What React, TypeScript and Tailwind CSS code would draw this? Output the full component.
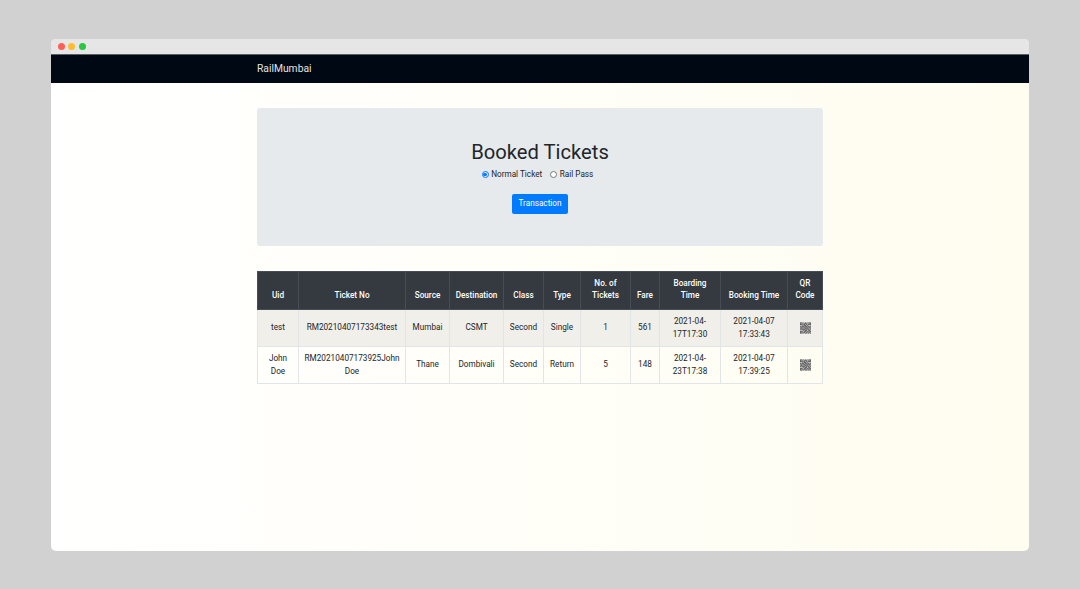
const headers = [
  { label: 'Uid', w: 'w-[41px]' },
  { label: 'Ticket No', w: 'w-[107px]' },
  { label: 'Source', w: 'w-[44px]' },
  { label: 'Destination', w: 'w-[54px]' },
  { label: 'Class', w: 'w-[40px]' },
  { label: 'Type', w: 'w-[37px]' },
  { label: 'No. of Tickets', w: 'w-[50px]' },
  { label: 'Fare', w: 'w-[29px]' },
  { label: 'Boarding Time', w: 'w-[61px]' },
  { label: 'Booking Time', w: 'w-[67px]' },
  { label: 'QR Code', w: 'w-[35px]' },
];

const rows = [
  {
    cells: ['test', 'RM20210407173343test', 'Mumbai', 'CSMT', 'Second', 'Single', '1', '561', '2021-04-17T17:30', '2021-04-07 17:33:43'],
    bg: 'bg-[#f1efea]',
  },
  {
    cells: ['John Doe', 'RM20210407173925John Doe', 'Thane', 'Dombivali', 'Second', 'Return', '5', '148', '2021-04-23T17:38', '2021-04-07 17:39:25'],
    bg: '',
  },
];

// rough qr pattern, it is only 11px wide in the picture
const qrCells = [
  '1110101010111',
  '1010011100101',
  '1110110101111',
  '0001011010000',
  '1011101101101',
  '0110110110110',
  '1101011011011',
  '0110101110100',
  '1011110101101',
  '0000101100110',
  '1110011011011',
  '1010110101010',
  '1110101101101',
];

function QrCode() {
  return (
    <svg width="11" height="12" viewBox="0 0 13 13" className="mx-auto block">
      <rect width="13" height="13" fill="#c8c8c8" />
      {qrCells.map((row, y) =>
        row.split('').map((c, x) =>
          c === '1' ? <rect key={`${x}-${y}`} x={x} y={y} width="1" height="1" fill="#444444" /> : null
        )
      )}
    </svg>
  );
}

export default function App() {
  return (
    <div className="h-[589px] bg-[#d1d1d1] px-[51px] pt-[39px] font-['Roboto',sans-serif]">
      <div className="h-[512px] rounded-[5px] overflow-hidden flex flex-col bg-gradient-to-r from-white to-[#fffdf0]">
        {/* Browser bar */}
        <div className="h-[16px] shrink-0 bg-[#e6e6e6] border-b border-[#5a5f66] flex items-center gap-[3.3px] pl-[7px] pb-px">
          <span className="w-[7px] h-[7px] rounded-full bg-[#ff5f57]" />
          <span className="w-[7px] h-[7px] rounded-full bg-[#febc2e]" />
          <span className="w-[7px] h-[7px] rounded-full bg-[#28c840]" />
        </div>

        {/* Navbar */}
        <div className="h-[28px] shrink-0 bg-[#000814] flex items-center pl-[206px]">
          <span className="text-[10.3px] text-[#e2e4e6] leading-none">RailMumbai</span>
        </div>

        <div className="ml-[206px] w-[566px] pt-[25px]">
          {/* Jumbotron */}
          <div className="h-[138px] bg-[#e7eaed] rounded-[3px] flex flex-col items-center pt-[31px]">
            <h1 className="text-[20.2px] leading-[26px] text-[#212529]">Booked Tickets</h1>
            <div className="flex items-center mt-[3px] pr-[5px] text-[8.2px] leading-[13px] text-[#212529]">
              <span className="w-[7px] h-[7px] rounded-full border border-[#0a7bff] flex items-center justify-center mr-[2.5px]">
                <span className="w-[3.5px] h-[3.5px] rounded-full bg-[#0a7bff]" />
              </span>
              <span>Normal Ticket</span>
              <span className="w-[7px] h-[7px] rounded-full border border-[#777] bg-white ml-[8px] mr-[2.5px]" />
              <span>Rail Pass</span>
            </div>
            <button className="mt-[13px] w-[56px] h-[20px] pb-px rounded-[2px] bg-[#007bff] text-white text-[8.2px] leading-none">
              Transaction
            </button>
          </div>

          {/* Tickets table */}
          <table className="mt-[25px] w-[566px] table-fixed border-collapse text-[8.2px] leading-[12.4px] text-[#212529] text-center">
            <thead>
              <tr className="h-[37.5px] bg-[#343a40] text-white">
                {headers.map((h) => (
                  <th key={h.label} className={`${h.w} border border-[#454d55] px-[4px] font-medium align-bottom pb-[7px]`}>
                    {h.label}
                  </th>
                ))}
              </tr>
            </thead>
            <tbody>
              {rows.map((row) => (
                <tr key={row.cells[0]} className={`h-[37px] ${row.bg}`}>
                  {row.cells.map((c, i) => (
                    <td key={i} className="border border-[#e2e5e8] px-[4px] align-middle">
                      {c}
                    </td>
                  ))}
                  <td className="border border-[#e2e5e8] align-middle">
                    <QrCode />
                  </td>
                </tr>
              ))}
            </tbody>
          </table>
        </div>
      </div>
    </div>
  );
}
